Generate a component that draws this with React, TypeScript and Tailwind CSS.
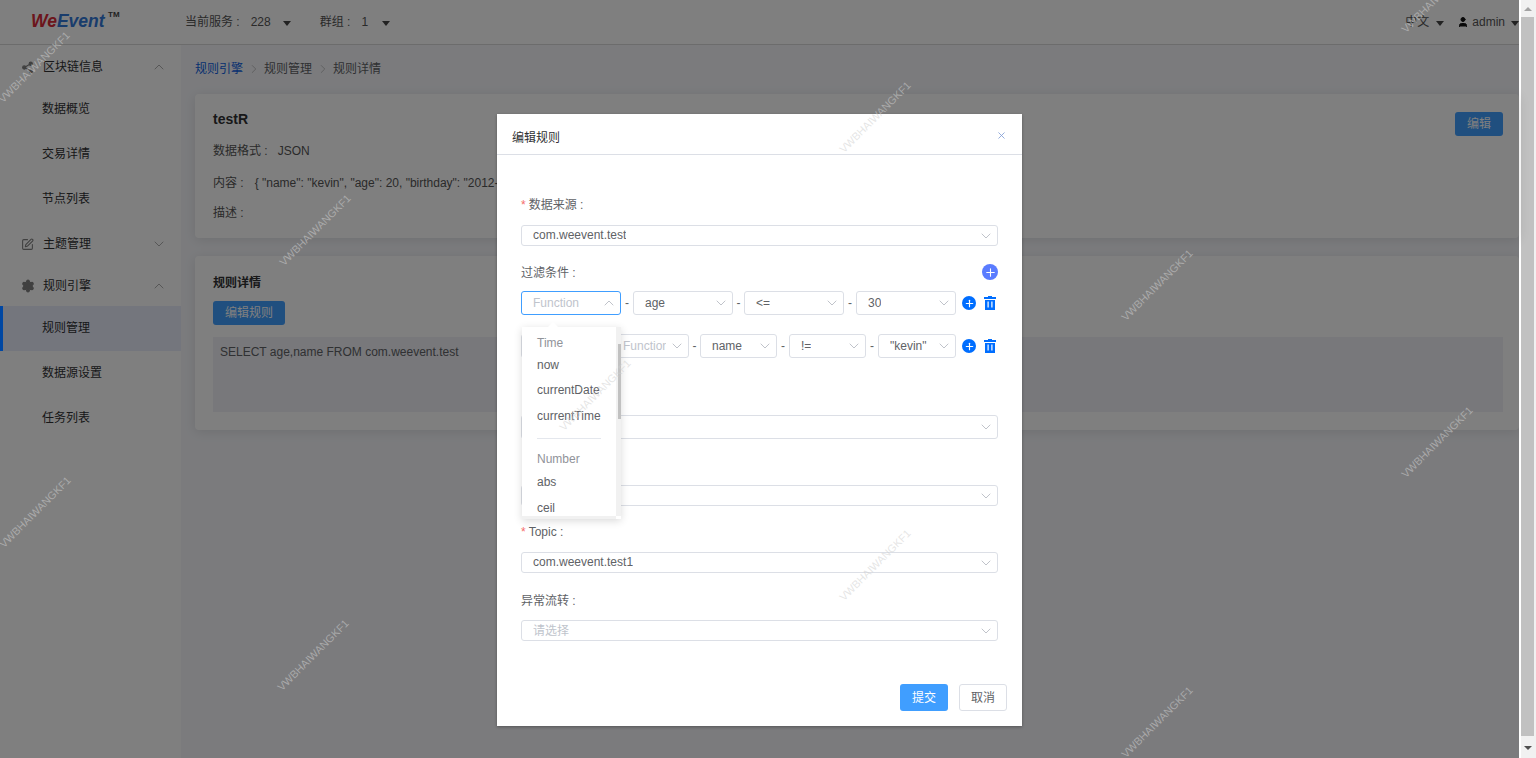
import { ChevronDown, ChevronUp, ChevronRight, SquarePen, Settings, Share2, User, Plus, X } from 'lucide-react';

const font = { fontFamily: '"Liberation Sans", "Noto Sans CJK SC", sans-serif' };

const marks = [
  [34, 67], [875, 117], [315, 230], [1157, 285], [595, 395], [1437, 442],
  [35, 512], [875, 565], [313, 655], [1157, 722], [1437, -3],
];

function Caret() {
  return <span className="ml-[10px] inline-block h-0 w-0 border-x-[4px] border-t-[5px] border-x-transparent border-t-[#444]" />;
}

function Group({ icon, label, open }: { icon: React.ReactNode; label: string; open: boolean }) {
  return (
    <div className="flex h-[42px] items-center pl-[21px] pr-[14px] pt-[2px] text-[#303133]">
      <span className="flex w-[22px] text-[#808080]">{icon}</span>
      <span className="flex-1">{label}</span>
      {open ? <ChevronUp size={16} strokeWidth={1.2} className="text-[#999]" /> : <ChevronDown size={16} strokeWidth={1.2} className="text-[#999]" />}
    </div>
  );
}

function SubItem({ label, active }: { label: string; active?: boolean }) {
  return (
    <div className={`relative flex h-[45px] items-center pb-[2px] pl-[42px] text-[#303133] ${active ? 'bg-[#e8ecfb]' : ''}`}>
      {active && <span className="absolute bottom-0 left-0 top-0 z-10 w-[3px] bg-[#0047a3]" />}
      {label}
    </div>
  );
}

function Select({ value, className, placeholder, focus, open, textClass = '' }: { value?: string; className: string; placeholder?: boolean; focus?: boolean; open?: boolean; textClass?: string }) {
  return (
    <div className={`flex shrink-0 items-center justify-between rounded-[3px] border pl-[11px] pr-[3px] ${focus ? 'border-[#409eff]' : 'border-[#dcdfe6]'} ${className}`}>
      <span className={`overflow-hidden whitespace-nowrap ${placeholder ? 'text-[#c0c4cc]' : 'text-[#606266]'} ${textClass}`}>{value}</span>
      {open ? <ChevronUp size={16} strokeWidth={1.2} className="shrink-0 text-[#b0b4bc]" /> : <ChevronDown size={16} strokeWidth={1.2} className="shrink-0 text-[#b0b4bc]" />}
    </div>
  );
}

function Label({ text, required }: { text: string; required?: boolean }) {
  return (
    <div className="flex h-5 items-center pt-[2px] text-[#606266]">
      {required && <span className="mr-[3px] text-[#f56c6c]">*</span>}
      {text}
    </div>
  );
}

function Trash() {
  return (
    <svg width="12" height="14" viewBox="0 0 12 14" className="text-[#006eff]">
      <path fill="currentColor" d="M4 0h4v1h4v2H0V1h4zM1 4h10v10H1z" />
      <path fill="#fff" d="M3.5 5.5h1.2v6H3.5zM7.3 5.5h1.2v6H7.3z" />
    </svg>
  );
}

function Actions() {
  return (
    <div className="ml-[6px] flex shrink-0 items-center gap-[8px]">
      <span className="flex h-[14px] w-[14px] items-center justify-center rounded-full bg-[#006eff] text-white">
        <Plus size={11} strokeWidth={2.5} />
      </span>
      <Trash />
    </div>
  );
}

function Dash({ w }: { w: string }) {
  return <span className={`shrink-0 text-center text-[#606266] ${w}`}>-</span>;
}

export default function App() {
  return (
    <div style={font} className="relative flex h-[758px] w-[1536px] overflow-hidden bg-white text-[12px]">
      <div className="flex h-full w-[1519px] shrink-0 flex-col">
        <header className="flex h-[45px] shrink-0 items-center border-b border-[#d8d8d8] bg-white text-[#555]">
          <div className="relative ml-[31px] w-[154px] text-[17.5px] font-bold italic leading-none">
            <span className="text-[#d92b38]">We</span>
            <span className="text-[#3278d8]">Event</span>
            <span className="absolute left-[77px] top-[-2px] text-[8px] not-italic text-[#444]">TM</span>
          </div>
          <span>当前服务 :</span>
          <span className="ml-[11px]">228</span>
          <span className="ml-[2px]"><Caret /></span>
          <span className="ml-[29px]">群组 :</span>
          <span className="ml-[11px]">1</span>
          <span className="ml-[4px]"><Caret /></span>
          <div className="ml-auto flex items-center">
            <span>中文</span>
            <span className="mr-[13px] -ml-[3px]"><Caret /></span>
            <User size={12} fill="#111" className="mr-[3px] text-[#111]" />
            <span>admin</span>
            <span className="-ml-[4px]"><Caret /></span>
          </div>
        </header>
        <div className="flex min-h-0 flex-1">
          <aside className="w-[181px] shrink-0 bg-white">
            <Group icon={<Share2 size={13} fill="#808080" />} label="区块链信息" open />
            <SubItem label="数据概览" />
            <SubItem label="交易详情" />
            <SubItem label="节点列表" />
            <Group icon={<SquarePen size={13} />} label="主题管理" open={false} />
            <Group icon={<Settings size={14} fill="#808080" />} label="规则引擎" open />
            <SubItem label="规则管理" active />
            <SubItem label="数据源设置" />
            <SubItem label="任务列表" />
          </aside>
          <main className="flex-1 bg-[#f6f7fb] pl-[14px] pt-[15px]">
            <div className="flex h-[18px] items-center text-[#606266]">
              <span className="text-[#0f5fe0]">规则引擎</span>
              <ChevronRight size={14} strokeWidth={1.2} className="mx-[3.5px] text-[#aaa]" />
              <span>规则管理</span>
              <ChevronRight size={14} strokeWidth={1.2} className="mx-[3.5px] text-[#aaa]" />
              <span>规则详情</span>
            </div>
            <section className="relative mt-[16px] h-[144px] rounded-[4px] bg-white pl-[18px] pt-[16px] text-[#555] shadow-[0_2px_12px_rgba(0,0,0,0.1)]">
              <div className="text-[14px] font-bold leading-[18px] text-[#303133]">testR</div>
              <div className="mt-[14px] flex leading-[18px]">数据格式 :<span className="ml-[10px]">JSON</span></div>
              <div className="mt-[14px] flex leading-[18px]">内容 :<span className="ml-[11px]">{'{ "name": "kevin", "age": 20, "birthday": "2012-'}</span></div>
              <div className="mt-[12px] leading-[18px]">描述 :</div>
              <button className="absolute right-[16px] top-[18px] h-[24px] w-[48px] rounded-[3px] bg-[#409eff] text-white">编辑</button>
            </section>
            <section className="mt-[18px] h-[174px] rounded-[4px] bg-white pl-[18px] pr-[16px] pt-[18px] shadow-[0_2px_12px_rgba(0,0,0,0.1)]">
              <div className="text-[12px] font-bold leading-[18px] text-[#303133]">规则详情</div>
              <button className="mt-[9px] block h-[24px] w-[72px] rounded-[3px] bg-[#409eff] text-white">编辑规则</button>
              <div className="mt-[12px] h-[75px] bg-[#f0f1f6] px-[7px] py-[7px] leading-[16px] text-[#606266]">SELECT age,name FROM com.weevent.test</div>
            </section>
          </main>
        </div>
      </div>

      {/* page scrollbar */}
      <div className="flex h-full w-[17px] shrink-0 flex-col border-l-[2px] border-l-white bg-[#f1f1f1] pr-[2px]">
        <div className="flex h-[17px] shrink-0 items-center justify-center"><span className="h-0 w-0 border-x-[4px] border-b-[4px] border-x-transparent border-b-[#a3a3a3]" /></div>
        <div className="flex-1 bg-[#c1c1c1]" />
        <div className="flex h-[22px] shrink-0 items-center justify-center pt-[2px]"><span className="h-0 w-0 border-x-[4px] border-t-[4px] border-x-transparent border-t-[#505050]" /></div>
      </div>

      {/* overlay */}
      <div className="absolute bottom-0 left-0 top-0 w-[1519px] bg-black/50" />

      {/* modal */}
      <div className="absolute left-[497px] top-[114px] flex h-[612px] w-[525px] flex-col bg-white shadow-[0_1px_3px_rgba(0,0,0,0.3)]">
        <div className="flex h-[41px] shrink-0 items-center justify-between border-b border-[#dcdfe6] pl-[15px] pr-[15px] text-[#303133]">
          <span className="pt-[8px]">编辑规则</span>
          <X size={11} strokeWidth={1.8} className="mt-[2px] text-[#7f9bd4]" />
        </div>
        <div className="flex-1 pl-[24px] pr-[24px] pt-[39px]">
          <Label text="数据来源 :" required />
          <Select value="com.weevent.test" textClass="mb-[2px]" className="mt-[11px] h-[21px] w-full" />
          <div className="mt-[16px] flex items-center justify-between">
            <Label text="过滤条件 :" />
            <span className="flex h-[16px] w-[16px] items-center justify-center rounded-full bg-[#5a7cff] text-white"><Plus size={13} strokeWidth={2} /></span>
          </div>
          <div className="mt-[9px] flex h-[24px] items-center">
            <Select value="Function" placeholder focus open className="h-full w-[100px]" />
            <Dash w="w-[12px]" />
            <Select value="age" className="h-full w-[100px]" />
            <Dash w="w-[11px]" />
            <Select value="<=" className="h-full w-[100px]" />
            <Dash w="w-[12px]" />
            <Select value="30" className="h-full w-[100px]" />
            <Actions />
          </div>
          <div className="mt-[19px] flex h-[24px] items-center">
            <Select value="Function" placeholder textClass="mr-[3px] w-[43px]" className="h-full w-[168px] !justify-end" />
            <Dash w="w-[11px]" />
            <Select value="name" className="h-full w-[77px]" />
            <Dash w="w-[12px]" />
            <Select value="!=" className="h-full w-[77px]" />
            <Dash w="w-[12px]" />
            <Select value={'"kevin"'} className="h-full w-[78px]" />
            <Actions />
          </div>
          <Select className="mt-[57px] h-[24px] w-[477px]" />
          <Select className="mt-[46px] h-[21px] w-[477px]" />
          <div className="mt-[15px]"><Label text="Topic :" required /></div>
          <Select value="com.weevent.test1" textClass="mb-[2px]" className="mt-[11px] h-[21px] w-[477px]" />
          <div className="mt-[17px]"><Label text="异常流转 :" /></div>
          <Select value="请选择" placeholder className="mt-[10px] h-[21px] w-[477px]" />
        </div>
        <div className="flex justify-end gap-[11px] pb-[15px] pr-[15px]">
          <button className="h-[27px] w-[48px] rounded-[3px] bg-[#409eff] text-white">提交</button>
          <button className="h-[27px] w-[48px] rounded-[3px] border border-[#dcdfe6] text-[#606266]">取消</button>
        </div>

        {/* function dropdown */}
        <div className="absolute left-[25px] top-[213px] h-[192px] w-[99px] bg-white shadow-[0_2px_8px_rgba(0,0,0,0.15)]">
          <span className="absolute left-[26px] top-[-5px] h-0 w-0 border-x-[5px] border-b-[5px] border-x-transparent border-b-white" />
          <div className="h-[189px] w-[94px] overflow-hidden pl-[15px] pt-[5px] text-[#606266]">
            <div className="h-[21px] leading-[23px] text-[#909399]">Time</div>
            <div className="h-[25px] leading-[25px]">now</div>
            <div className="h-[25px] leading-[25px]">currentDate</div>
            <div className="h-[26px] leading-[26px]">currentTime</div>
            <div className="mt-[9px] h-px w-[64px] bg-[#e4e7ed]" />
            <div className="mt-[8px] h-[23px] leading-[24px] text-[#909399]">Number</div>
            <div className="h-[25px] leading-[25px]">abs</div>
            <div className="h-[25px] leading-[26px]">ceil</div>
          </div>
          <div className="absolute bottom-0 left-0 h-[3px] w-[94px] bg-[#f1f1f1]" />
          <div className="absolute right-0 top-0 h-[189px] w-[5px] bg-[#f1f1f1]" />
          <div className="absolute right-0 top-[17px] h-[75px] w-[3px] bg-[#c1c1c1]" />
        </div>
      </div>

      {/* watermarks */}
      {marks.map(([x, y]) => (
        <span
          key={`${x}-${y}`}
          className="pointer-events-none absolute -translate-x-1/2 -translate-y-1/2 -rotate-45 whitespace-nowrap text-[10.8px] text-[#d0d0d0]/55"
          style={{ left: x, top: y }}
        >
          VWBHAIWANGKF1
        </span>
      ))}
    </div>
  );
}
